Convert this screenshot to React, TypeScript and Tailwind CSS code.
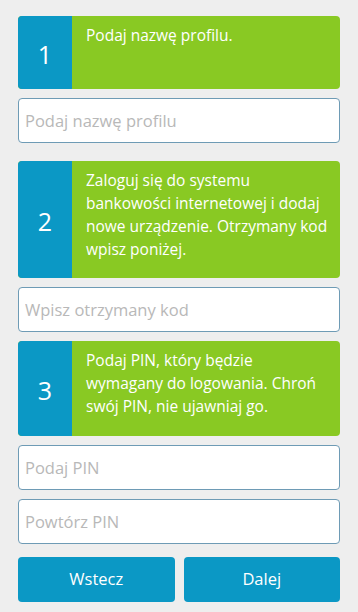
import React from 'react';

const font = { fontFamily: '"Open Sans", "Noto Sans", sans-serif' };

function Step({ n, lines, minH }: { n: number; lines: string[]; minH: string }) {
  return (
    <div className={`flex rounded-[4px] overflow-hidden bg-[#89c923] ${minH}`}>
      <div className="w-[54px] shrink-0 bg-[#0b98c5] flex items-center justify-center text-white text-[25px] pt-[5px]">
        {n}
      </div>
      <p className="pl-[14px] pr-[4px] pt-[8px] pb-[17px] text-white text-[15.5px] leading-[23px] whitespace-nowrap">
        {lines.map((l, i) => (
          <React.Fragment key={i}>
            {i > 0 && <br />}
            {l}
          </React.Fragment>
        ))}
      </p>
    </div>
  );
}

function Field({ placeholder }: { placeholder: string }) {
  return (
    <input
      placeholder={placeholder}
      className="block w-full h-[45px] rounded-[4px] border border-[#6e9bb5] bg-white px-[6px] text-[16.5px] text-gray-700 placeholder:text-[#b8b8b8] outline-none"
      style={font}
    />
  );
}

export default function App() {
  return (
    <div className="min-h-[612px] bg-[#eeeeee] px-[18px] pt-[16px] pb-[10px]" style={font}>
      <Step n={1} lines={['Podaj nazwę profilu.']} minH="min-h-[73px]" />
      <div className="mt-[9px]">
        <Field placeholder="Podaj nazwę profilu" />
      </div>
      <div className="mt-[18px]">
        <Step
          n={2}
          lines={['Zaloguj się do systemu', 'bankowości internetowej i dodaj', 'nowe urządzenie. Otrzymany kod', 'wpisz poniżej.']}
          minH="min-h-[117px]"
        />
      </div>
      <div className="mt-[9px]">
        <Field placeholder="Wpisz otrzymany kod" />
      </div>
      <div className="mt-[9px]">
        <Step
          n={3}
          lines={['Podaj PIN, który będzie', 'wymagany do logowania. Chroń', 'swój PIN, nie ujawniaj go.']}
          minH="min-h-[95px]"
        />
      </div>
      <div className="mt-[9px]">
        <Field placeholder="Podaj PIN" />
      </div>
      <div className="mt-[9px]">
        <Field placeholder="Powtórz PIN" />
      </div>
      <div className="mt-[13px] grid grid-cols-2 gap-[9px]">
        <button className="h-[45px] rounded-[4px] bg-[#0b98c5] text-white text-[16.5px]">Wstecz</button>
        <button className="h-[45px] rounded-[4px] bg-[#0b98c5] text-white text-[16.5px]">Dalej</button>
      </div>
    </div>
  );
}
